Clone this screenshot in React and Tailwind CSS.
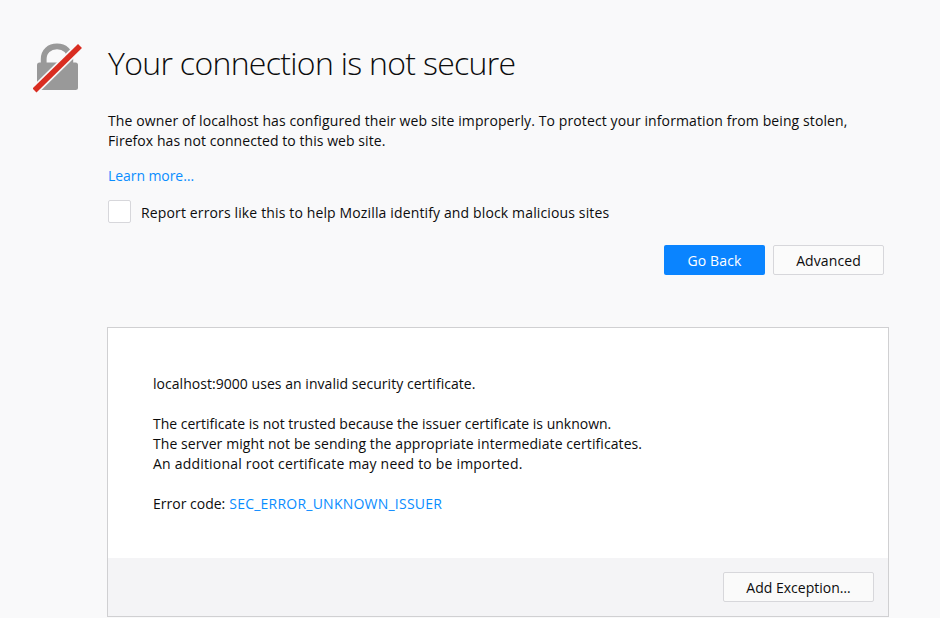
function InsecureLockIcon() {
  return (
    <svg className="mt-[43px] ml-px h-[52px] w-[50px] shrink-0" viewBox="0 0 50 52" fill="none">
      <path d="M10.7 23V16C10.7 8.3 16.3 3.4 24 3.4S37.3 8.3 37.3 16V23" stroke="#999" strokeWidth="5.8" />
      <rect x="4" y="19.5" width="41" height="27.5" rx="2.5" fill="#999" />
      <path d="M1.5 47.5L47 3" stroke="#f9f9fa" strokeWidth="9" />
      <path d="M1.5 47.5L47 3" stroke="#d92d21" strokeWidth="5.6" />
    </svg>
  );
}

function Button({ className, children }) {
  return (
    <button className={`flex h-[30px] items-center justify-center rounded-[2px] pt-[2px] text-[14px] whitespace-nowrap ${className}`}>
      {children}
    </button>
  );
}

export default function App() {
  return (
    <main className="flex h-[618px] w-[940px] overflow-hidden bg-[#f9f9fa] pl-[32px] font-['Open_Sans','Noto_Sans',sans-serif] text-[14px] leading-[20px] text-[#0c0c0d]">
      <InsecureLockIcon />
      <div className="ml-[24px] flex w-[782px] shrink-0 flex-col">
        <h1 className="mt-[42px] h-[43px] pl-px text-[32px] leading-[42px] font-light tracking-[-0.69px] whitespace-nowrap">
          <span>Your connection is not secure</span>
        </h1>
        <div className="mt-[26px] flex flex-col items-start pl-px whitespace-nowrap">
          <span className="tracking-[0.108px]">The owner of localhost has configured their web site improperly. To protect your information from being stolen,</span>
          <span className="tracking-[0.06px]">Firefox has not connected to this web site.</span>
          <a className="mt-[15px] tracking-[-0.07px] text-[#0a8dff]">Learn more…</a>
        </div>
        <label className="mt-[14px] flex h-[23px] items-center pl-px whitespace-nowrap">
          <span className="size-[23px] rounded-[2px] border border-[#d7d7db] bg-white" />
          <span className="ml-[10px] pt-[2px] tracking-[0.138px]">Report errors like this to help Mozilla identify and block malicious sites</span>
        </label>
        <div className="mt-[22px] flex justify-end gap-2 pr-[5px]">
          <Button className="w-[101px] bg-[#0a84ff] text-white"><span className="tracking-[0.15px]">Go Back</span></Button>
          <Button className="w-[111px] border border-[#d7d7db] bg-[#fbfbfb]"><span className="tracking-[0.1px]">Advanced</span></Button>
        </div>
        <section className="mt-[52px] flex h-[290px] flex-col border border-[#d0d0d2] bg-white">
          <div className="flex h-[230px] flex-col items-start pt-[46px] pl-[45px] whitespace-nowrap">
            <span className="tracking-[0.04px]">localhost:9000 uses an invalid security certificate.</span>
            <span className="mt-5">The certificate is not trusted because the issuer certificate is unknown.</span>
            <span className="tracking-[0.08px]">The server might not be sending the appropriate intermediate certificates.</span>
            <span className="tracking-[0.2px]">An additional root certificate may need to be imported.</span>
            <div className="mt-5 flex">
              <span>Error code:</span>
              <a className="ml-[4px] tracking-[0.23px] text-[#0a8dff]">SEC_ERROR_UNKNOWN_ISSUER</a>
            </div>
          </div>
          <div className="flex flex-1 justify-end bg-[#f4f4f6] pt-[14px] pr-[14px]">
            <Button className="w-[151px] border border-[#d7d7db] bg-[#fafafa]"><span>Add Exception…</span></Button>
          </div>
        </section>
      </div>
    </main>
  );
}
